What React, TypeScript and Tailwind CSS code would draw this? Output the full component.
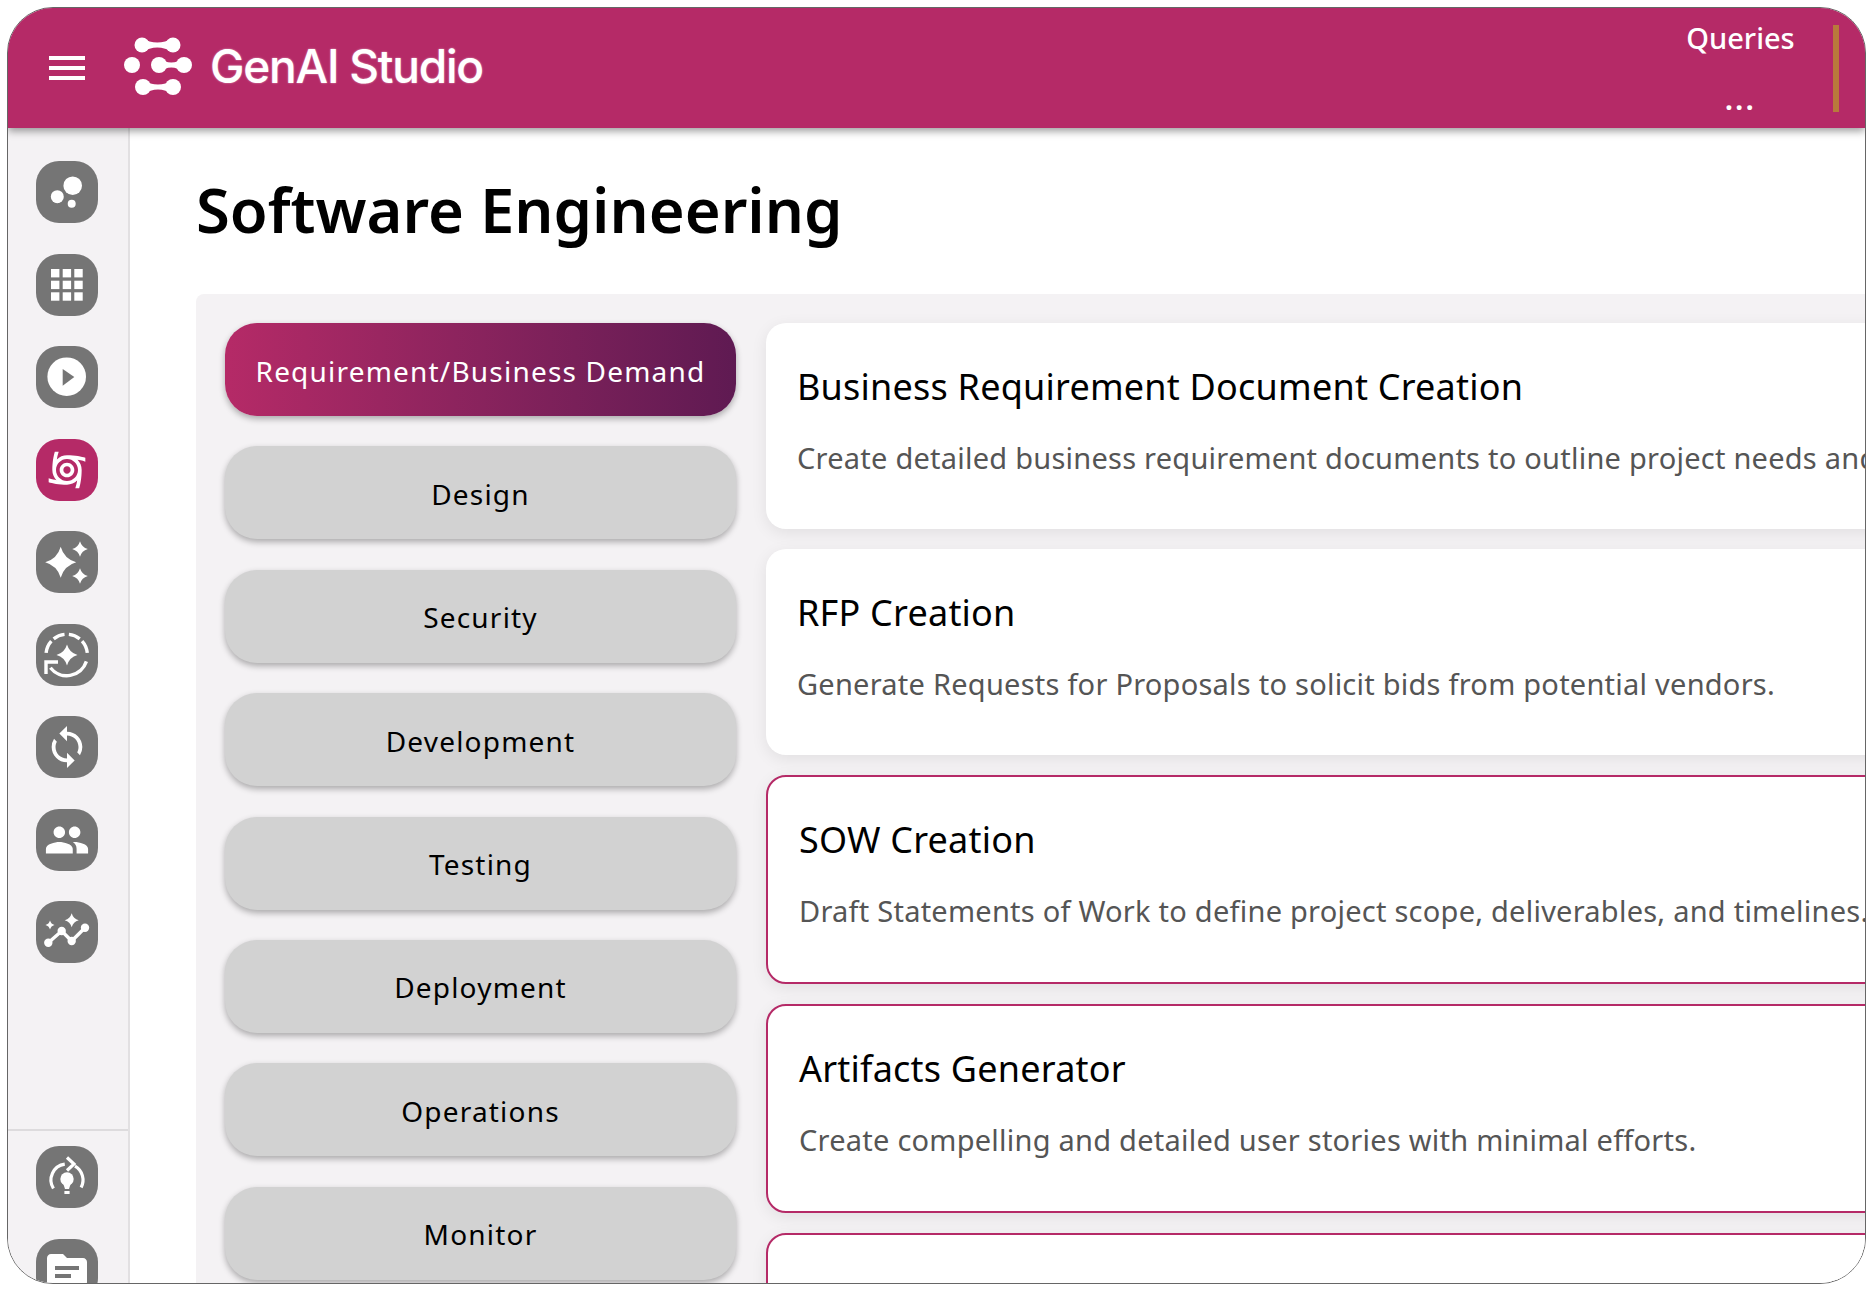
import React from "react";
import { MdCyclone, MdSync, MdGroup, MdTopic } from "react-icons/md";

const pt = (cx: number, cy: number, r: number, a: number) => {
  const t = (a * Math.PI) / 180;
  return [cx + r * Math.sin(t), cy - r * Math.cos(t)];
};
const arc = (cx: number, cy: number, r: number, a0: number, a1: number) => {
  const [x0, y0] = pt(cx, cy, r, a0);
  const [x1, y1] = pt(cx, cy, r, a1);
  return `M${x0} ${y0}A${r} ${r} 0 ${Math.abs(a1 - a0) > 180 ? 1 : 0} 1 ${x1} ${y1}`;
};
const star = (cx: number, cy: number, r: number) =>
  `M${cx} ${cy - r}Q${cx + r * 0.22} ${cy - r * 0.22} ${cx + r} ${cy}Q${cx + r * 0.22} ${cy + r * 0.22} ${cx} ${cy + r}Q${cx - r * 0.22} ${cy + r * 0.22} ${cx - r} ${cy}Q${cx - r * 0.22} ${cy - r * 0.22} ${cx} ${cy - r}Z`;

const Svg = ({ children }: { children: React.ReactNode }) => (
  <svg viewBox="0 0 62 62" className="w-[62px] h-[62px]">{children}</svg>
);

const icons: React.ReactNode[] = [
  <Svg><circle cx="36.7" cy="24.7" r="9.3" fill="#fff" /><circle cx="21.3" cy="35.7" r="6.5" fill="#fff" /><circle cx="35.7" cy="42.7" r="4" fill="#fff" /></Svg>,
  <Svg>
    {[15, 26.7, 38.3].map((y) => [15, 26.7, 38.3].map((x) => <rect key={`${x}${y}`} x={x} y={y} width="8.4" height="8.4" fill="#fff" />))}
  </Svg>,
  <Svg><circle cx="30.7" cy="30.7" r="19.3" fill="#fff" /><path d="M26.7 23L38.3 31L26.7 39.7Z" fill="#757575" /></Svg>,
  <MdCyclone className="w-[44px] h-[44px] text-white" />,
  <Svg><path d={star(24.7, 31.3, 15.5)} fill="#fff" /><path d={star(44, 18, 7.8)} fill="#fff" /><path d={star(44, 45, 7.8)} fill="#fff" /></Svg>,
  <Svg>
    <g fill="none" stroke="#fff" strokeWidth="3.4">
      <path d={arc(30.7, 31, 20.7, -39, -6)} /><path d={arc(30.7, 31, 20.7, 6, 39)} />
      <path d={arc(30.7, 31, 20.7, 48, 84)} /><path d={arc(30.7, 31, 20.7, -84, -48)} />
      <path d={arc(30.7, 31, 20.7, 108, 232)} />
      <path d="M22 38H10V50" />
    </g>
    <path d={star(31, 31, 10.5)} fill="#fff" />
  </Svg>,
  <MdSync className="w-[46px] h-[46px] text-white" />,
  <MdGroup className="w-[46px] h-[46px] text-white" />,
  <Svg>
    <path d="M12.3 41.7L25.7 30L35.7 40L49 26.7" fill="none" stroke="#fff" strokeWidth="3.4" />
    <circle cx="12.3" cy="41.7" r="4.2" fill="#fff" /><circle cx="25.7" cy="30" r="4.2" fill="#fff" />
    <circle cx="35.7" cy="40" r="4.2" fill="#fff" /><circle cx="49" cy="26.7" r="4.2" fill="#fff" />
    <path d={star(35.7, 19.3, 7)} fill="#fff" /><path d={star(14, 24, 4.5)} fill="#fff" />
  </Svg>,
];

const bottomIcons: React.ReactNode[] = [
  <Svg>
    <g fill="none" stroke="#fff" strokeWidth="3.2">
      <path d={arc(31, 34, 16, -122, -8)} /><path d={arc(31, 34, 16, 30, 118)} />
      <path d="M31 11.5L38 18L31 24.5" />
    </g>
    <circle cx="31" cy="33" r="6.7" fill="#fff" />
    <path d="M26.4 35L35.6 35L33 43L29 43Z" fill="#fff" />
    <rect x="28.4" y="45" width="5.2" height="3" fill="#fff" />
  </Svg>,
  <MdTopic className="w-[48px] h-[48px] text-white" />,
];

const Tile = ({ active, children }: { active?: boolean; children: React.ReactNode }) => (
  <div className={`w-[62px] h-[62px] rounded-[23px] flex items-center justify-center shrink-0 ${active ? "bg-[#b52a67]" : "bg-[#757575]"}`}>{children}</div>
);

const buttons = ["Requirement/Business Demand", "Design", "Security", "Development", "Testing", "Deployment", "Operations", "Monitor"];

const cards = [
  { t: "Business Requirement Document Creation", d: "Create detailed business requirement documents to outline project needs and objectives." },
  { t: "RFP Creation", d: "Generate Requests for Proposals to solicit bids from potential vendors." },
  { t: "SOW Creation", d: "Draft Statements of Work to define project scope, deliverables, and timelines.", b: true },
  { t: "Artifacts Generator", d: "Create compelling and detailed user stories with minimal efforts.", b: true },
  { t: "", d: "", b: true },
];

export default function App() {
  return (
    <div className="w-[1872px] h-[1292px] bg-white p-[7px] overflow-hidden" style={{ fontFamily: '"Noto Sans", sans-serif' }}>
      <div className="w-[1859px] h-[1277px] rounded-[46px] border border-[#666] overflow-hidden flex flex-col bg-white">
        <header className="relative z-10 h-[120px] shrink-0 bg-[#b52a67] shadow-[0_3px_8px_rgba(0,0,0,0.4)] flex items-center text-white">
          <div className="ml-[41px] w-[36px] flex flex-col gap-[6.5px]">
            <span className="h-[3.5px] bg-white" /><span className="h-[3.5px] bg-white" /><span className="h-[3.5px] bg-white" />
          </div>
          <svg viewBox="0 0 84 70" className="ml-[31px] mb-[6px] w-[84px] h-[70px] blur-[0.5px]" fill="#fff">
            <path d="M26 8Q41 17 57 8V22Q41 13 26 22Z" />
            <path d="M43 28Q55 37 68 28V42Q55 33 43 42Z" />
            <path d="M27 50Q42 59 57 50V64Q42 55 27 64Z" />
            <circle cx="26" cy="15" r="7.5" /><circle cx="57" cy="15" r="7.5" />
            <circle cx="16" cy="35" r="8" /><circle cx="43" cy="35" r="8" /><circle cx="68" cy="35" r="8" />
            <circle cx="27" cy="57" r="8" /><circle cx="57" cy="57" r="8" />
          </svg>
          <div className="ml-[10px] mb-[4px] text-[46px] font-medium tracking-[-1.2px] leading-none [text-shadow:0_0_2px_rgba(255,255,255,0.6)]" style={{ fontFamily: 'Inter, sans-serif' }}>GenAI Studio</div>
          <div className="ml-auto w-[107px] h-full flex flex-col items-center text-[29px] leading-none font-medium">
            <span className="mt-[15px]">Queries</span>
            <span className="mt-[33px] text-[28px] tracking-[2.5px] font-bold">...</span>
          </div>
          <div className="ml-[39px] mr-[26px] w-[6px] h-[87px] bg-[#b97a3c]" />
        </header>
        <div className="flex-1 flex overflow-hidden">
          <aside className="w-[122px] shrink-0 bg-[#f4f2f4] border-r-2 border-[#e2e0e2] flex flex-col">
            <div className="h-[1003px] shrink-0 border-b-2 border-[#dddbdd] pt-[33px] pl-[28px] flex flex-col gap-[30.5px]">
              {icons.map((ic, i) => <Tile key={i} active={i === 3}>{ic}</Tile>)}
            </div>
            <div className="pt-[15px] pl-[28px] flex flex-col gap-[30.5px]">
              {bottomIcons.map((ic, i) => <Tile key={i}>{ic}</Tile>)}
            </div>
          </aside>
          <main className="flex-1 min-w-0 pl-[66px] overflow-hidden">
            <h1 className="pt-[41px] h-[166px] text-[61.5px] leading-[80px] font-semibold text-black whitespace-nowrap">Software Engineering</h1>
            <div className="w-[1800px] h-[1000px] bg-[#f4f2f4] rounded-tl-[8px] pt-[29px] pl-[29px] flex gap-[30px]">
              <div className="w-[511px] shrink-0 flex flex-col gap-[30.4px]">
                {buttons.map((b, i) => (
                  <div key={b} className={`h-[93px] shrink-0 rounded-[32px] pt-[2px] flex items-center justify-center text-[28px] tracking-[1.2px] shadow-[0_3px_6px_rgba(0,0,0,0.3)] ${i === 0 ? "bg-gradient-to-r from-[#b52a67] to-[#5f1a52] text-white" : "bg-[#d2d2d2] text-black"}`}>{b}</div>
                ))}
              </div>
              <div className="flex-1 flex flex-col gap-[20px]">
                {cards.map((c, i) => (
                  <div key={i} className={`shrink-0 bg-white rounded-[20px] pl-[31px] shadow-[0_4px_16px_rgba(0,0,0,0.08)] ${c.b ? "h-[209px] border-2 border-[#b52a67] pt-[31px]" : "h-[206px] pt-[32px]"}`}>
                    <div className="text-[36px] leading-[64px] tracking-[0.22px] text-black whitespace-nowrap">{c.t}</div>
                    <div className="mt-[7px] text-[29px] leading-[64px] tracking-[0.24px] text-[#555] whitespace-nowrap">{c.d}</div>
                  </div>
                ))}
              </div>
            </div>
          </main>
        </div>
      </div>
    </div>
  );
}
